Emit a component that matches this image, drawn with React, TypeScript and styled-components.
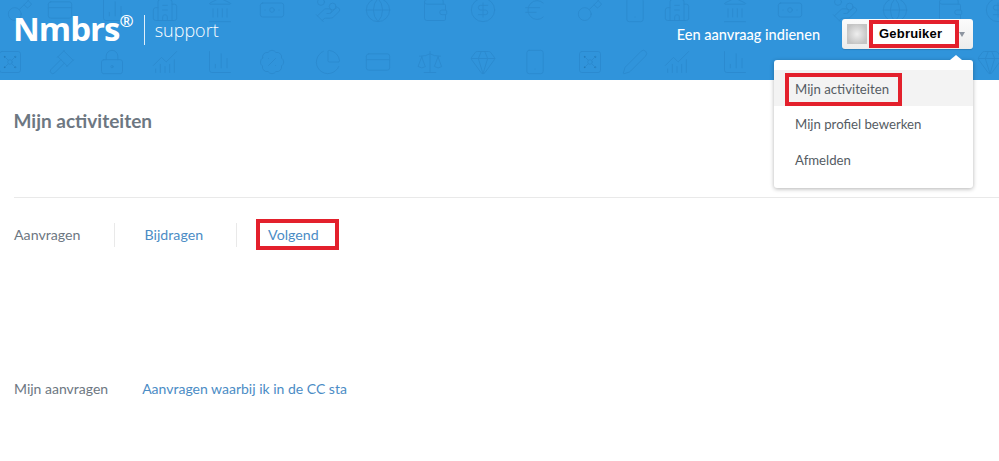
import React from "react";
import styled, { createGlobalStyle } from "styled-components";
import {
  Banknote,
  BadgePercent,
  Building2,
  ChartColumn,
  ChartNoAxesCombined,
  ChartPie,
  CircleDollarSign,
  CreditCard,
  Euro,
  Gavel,
  Gem,
  Globe,
  HandCoins,
  Key,
  Landmark,
  LockKeyhole,
  LucideIcon,
  Pen,
  Scale,
  Smartphone,
  Vault,
  Wallet,
} from "lucide-react";

const colors = {
  blue: "#3094db",
  pattern: "#2b8acf",
  text: "#6d7782",
  link: "#4b8cc5",
  red: "#e3202c",
  line: "#e9e9e9",
};

const GlobalStyle = createGlobalStyle`
  html, body {
    margin: 0;
    background: #fff;
    font-family: "Lato", "Open Sans", sans-serif;
  }
`;

const Header = styled.header`
  position: relative;
  height: 80px;
  background: ${colors.blue};
  display: flex;
  align-items: flex-start;
  justify-content: space-between;
  padding: 0 26px 0 13px;
  box-sizing: border-box;
`;

const Pattern = styled.svg`
  position: absolute;
  inset: 0;
`;

const Brand = styled.a`
  position: relative;
  display: flex;
  align-items: flex-start;
  padding-top: 9px;
  color: #fff;
`;

const Logo = styled.span`
  font-family: "Open Sans", sans-serif;
  font-size: 33px;
  line-height: 40px;
  font-weight: 700;
  letter-spacing: -1px;
`;

const Registered = styled.sup`
  font-family: "Open Sans", sans-serif;
  font-size: 17px;
  font-weight: 600;
  line-height: 24px;
  vertical-align: top;
`;

const BrandLine = styled.span`
  width: 1px;
  height: 30px;
  margin: 6px 10px 0 10px;
  background: rgba(255, 255, 255, 0.85);
`;

const Support = styled.span`
  font-family: "Open Sans", sans-serif;
  font-size: 18px;
  font-weight: 300;
  line-height: 24px;
  margin-top: 9px;
`;

const HeaderActions = styled.nav`
  position: relative;
  display: flex;
  align-items: center;
  gap: 22px;
  padding-top: 19px;
`;

const RequestLink = styled.a`
  color: #fff;
  font-size: 14.5px;
  font-weight: 500;
`;

const UserMenu = styled.div`
  position: relative;
`;

const UserButton = styled.div`
  width: 131px;
  height: 30px;
  box-sizing: border-box;
  padding: 0 5px;
  display: flex;
  align-items: center;
  background: linear-gradient(#fbfbfb, #ececec);
  border-radius: 3px;
  box-shadow: 0 1px 1px rgba(0, 0, 0, 0.15);
`;

const Avatar = styled.span`
  width: 20px;
  height: 20px;
  flex: none;
  background: radial-gradient(circle at 50% 50%, #eeeeee 0, #c4c4c4 75%);
`;

const UserName = styled.span`
  width: 76px;
  height: 20px;
  margin-left: 2px;
  padding-left: 6px;
  background: #fff;
  border: 4px solid ${colors.red};
  color: #000;
  font-family: "Liberation Sans", Arial, sans-serif;
  font-size: 13px;
  font-weight: 700;
  line-height: 20px;
  letter-spacing: 0.2px;
`;

const Caret = styled.span`
  width: 0;
  height: 0;
  margin-left: 0;
  border-left: 3px solid transparent;
  border-right: 3px solid transparent;
  border-top: 5px solid #8d95a0;
`;

const Dropdown = styled.ul`
  position: absolute;
  top: 41px;
  right: 0;
  width: 199px;
  height: 128px;
  box-sizing: border-box;
  margin: 0;
  padding: 10px 0;
  list-style: none;
  background: #fff;
  border-radius: 3px;
  box-shadow: 0 1px 4px rgba(0, 0, 0, 0.3);

  &::before {
    content: "";
    position: absolute;
    top: -5px;
    right: 11px;
    border-left: 6px solid transparent;
    border-right: 6px solid transparent;
    border-bottom: 5px solid #fff;
  }
`;

const DropdownItem = styled.li<{ $active?: boolean }>`
  height: 36px;
  padding-left: ${(p) => (p.$active ? "11px" : "21px")};
  display: flex;
  align-items: ${(p) => (p.$active ? "flex-end" : "center")};
  background: ${(p) => (p.$active ? "#f3f3f3" : "transparent")};
  color: #555c63;
  font-size: 13.2px;
`;

const Highlight = styled.span`
  display: block;
  padding: 0 9px 0 6px;
  height: 25px;
  line-height: 25px;
  border: 4px solid ${colors.red};
`;

const Main = styled.main`
  padding: 0 0 0 14px;
  color: ${colors.text};
`;

const Title = styled.h1`
  margin: 0 0 0 -0.5px;
  padding-top: 30px;
  height: 87px;
  font-size: 19px;
  line-height: 22px;
  font-weight: 700;
`;

const Tabs = styled.div`
  border-top: 1px solid ${colors.line};
  margin-top: 0;
  padding-top: 21px;
  display: flex;
  align-items: center;
  height: 31px;
  font-size: 14.2px;
`;

const Tab = styled.a`
  color: ${colors.link};
`;

const TabLabel = styled.span`
  color: ${colors.text};
`;

const TabLine = styled.span`
  width: 1px;
  height: 24px;
  margin: 0 30px 0 33px;
  background: ${colors.line};
`;

const BoxedTab = styled(Tab)`
  margin-left: -11px;
  width: 59px;
  height: 23px;
  line-height: 23px;
  padding: 0 8px;
  border: 4px solid ${colors.red};
`;

const RequestRow = styled.div`
  display: flex;
  gap: 34px;
  margin-top: 130px;
  font-size: 14px;
`;

const patternIcons: [LucideIcon, number, number][] = [
  [Key, 6, -4],
  [CreditCard, 46, -4],
  [ChartColumn, 100, -4],
  [Building2, 151, -4],
  [Landmark, 206, -4],
  [Banknote, 258, -4],
  [HandCoins, 314, -4],
  [Globe, 364, -4],
  [Wallet, 421, -4],
  [CircleDollarSign, 469, -4],
  [Euro, 521, -4],
  [Key, 576, -4],
  [Smartphone, 621, -4],
  [Building2, 663, -4],
  [Landmark, 721, -4],
  [Banknote, 776, -4],
  [HandCoins, 831, -4],
  [Globe, 881, -4],
  [Wallet, 936, -4],
  [CircleDollarSign, 984, -4],
  [Vault, -4, 48],
  [Gavel, 48, 48],
  [LockKeyhole, 98, 48],
  [ChartNoAxesCombined, 151, 48],
  [ChartColumn, 206, 48],
  [BadgePercent, 258, 48],
  [ChartPie, 314, 48],
  [CreditCard, 364, 48],
  [Scale, 416, 48],
  [Gem, 469, 48],
  [Smartphone, 521, 48],
  [Vault, 576, 48],
  [Pen, 621, 48],
  [ChartNoAxesCombined, 663, 48],
  [ChartColumn, 721, 48],
  [Gem, 976, 48],
];

const App = () => {
  return (
    <>
      <GlobalStyle />
      <Header>
        <Pattern width="999" height="80" viewBox="0 0 999 80">
          {patternIcons.map(([Icon, x, y], i) => (
            <Icon key={i} x={x} y={y} size={28} strokeWidth={0.8} color={colors.pattern} />
          ))}
        </Pattern>
        <Brand>
          <Logo>Nmbrs</Logo>
          <Registered>®</Registered>
          <BrandLine />
          <Support>support</Support>
        </Brand>
        <HeaderActions>
          <RequestLink>Een aanvraag indienen</RequestLink>
          <UserMenu>
            <UserButton>
              <Avatar />
              <UserName>Gebruiker</UserName>
              <Caret />
            </UserButton>
            <Dropdown>
              <DropdownItem $active>
                <Highlight>Mijn activiteiten</Highlight>
              </DropdownItem>
              <DropdownItem>Mijn profiel bewerken</DropdownItem>
              <DropdownItem>Afmelden</DropdownItem>
            </Dropdown>
          </UserMenu>
        </HeaderActions>
      </Header>
      <Main>
        <Title>Mijn activiteiten</Title>
        <Tabs>
          <TabLabel>Aanvragen</TabLabel>
          <TabLine />
          <Tab>Bijdragen</Tab>
          <TabLine />
          <BoxedTab>Volgend</BoxedTab>
        </Tabs>
        <RequestRow>
          <TabLabel>Mijn aanvragen</TabLabel>
          <Tab>Aanvragen waarbij ik in de CC sta</Tab>
        </RequestRow>
      </Main>
    </>
  );
};

export default App;
